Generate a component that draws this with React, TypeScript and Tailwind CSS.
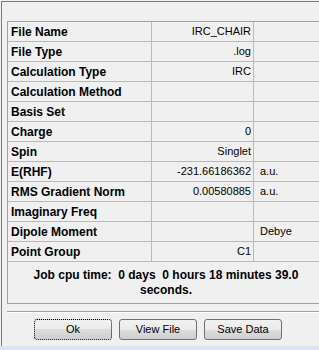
const rows: [string, string, string][] = [
  ["File Name", "IRC_CHAIR", ""],
  ["File Type", ".log", ""],
  ["Calculation Type", "IRC", ""],
  ["Calculation Method", "", ""],
  ["Basis Set", "", ""],
  ["Charge", "0", ""],
  ["Spin", "Singlet", ""],
  ["E(RHF)", "-231.66186362", "a.u."],
  ["RMS Gradient Norm", "0.00580885", "a.u."],
  ["Imaginary Freq", "", ""],
  ["Dipole Moment", "", "Debye"],
  ["Point Group", "C1", ""],
];

function Btn({ label, focused }: { label: string; focused?: boolean }) {
  return (
    <button
      className={
        "h-[21px] w-[78px] rounded-[3px] border bg-[linear-gradient(#f2f2f2,#ebebeb_50%,#dddddd_50%,#cfcfcf)] text-[11px] leading-none text-black " +
        (focused ? "border-dotted border-black" : "border-[#707070]")
      }
    >
      {label}
    </button>
  );
}

export default function App() {
  return (
    <div className="flex h-[350px] w-[319px] flex-col overflow-hidden bg-[#f0f0f0] font-['Liberation_Sans',Arial,sans-serif] text-black">
      <div className="ml-px mt-px flex h-[345px] w-[340px] flex-col border-l border-t border-[#7a7a7a]">
        <div className="h-[19px] shrink-0" />
        <div className="ml-[5px] border-b border-l border-t border-[#a0a0a0]">
          {rows.map(([label, value, unit]) => (
            <div
              key={label}
              className="grid h-[20px] grid-cols-[144px_102px_1fr] border-b border-[#b9b9b9]"
            >
              <div className="flex items-center border-r border-[#b9b9b9] pl-[3px] text-[12px] font-bold">
                {label}
              </div>
              <div className="flex items-center justify-end border-r border-[#b9b9b9] pr-[2px] text-[11px]">
                {value}
              </div>
              <div className="flex items-center pl-[6px] text-[11px]">{unit}</div>
            </div>
          ))}
          <div className="flex h-[41px] w-[316px] flex-col items-center justify-center whitespace-pre text-[12px] font-bold leading-[15px]">
            <span>Job cpu time:  0 days  0 hours 18 minutes 39.0</span>
            <span>seconds.</span>
          </div>
        </div>
        <div className="ml-[5px] mt-[7px] border-b border-t border-b-white border-t-[#a0a0a0]" />
        <div className="ml-[32px] mt-[6px] flex gap-[7px]">
          <Btn label="Ok" focused />
          <Btn label="View File" />
          <Btn label="Save Data" />
        </div>
      </div>
      <div className="flex-1 bg-[#dae5f1]" />
    </div>
  );
}
